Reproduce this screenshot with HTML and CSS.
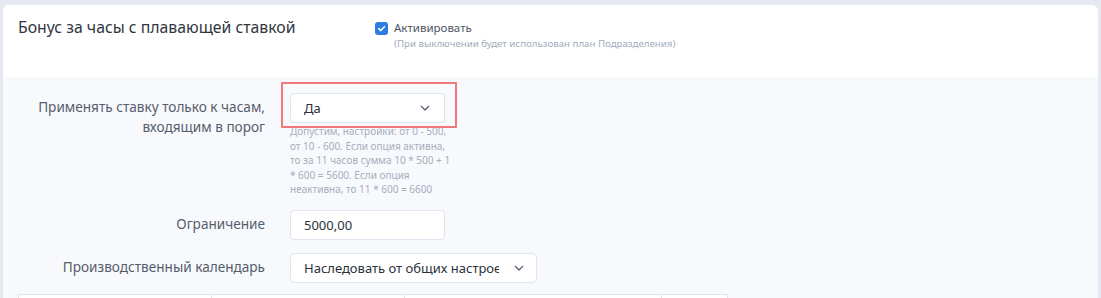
FILE: index.html
```html
<!DOCTYPE html>
<html lang="ru">
<head>
    <meta charset="UTF-8">
    <title>Бонус за часы с плавающей ставкой</title>
    <link rel="stylesheet" href="styles.css">
</head>
<body>
    <div class="card">
        <div class="card-header">
            <h2 class="card-title">Бонус за часы с плавающей ставкой</h2>
            <div class="activate">
                <label class="check-row">
                    <span class="checkbox">
                        <svg width="9" height="9" viewBox="0 0 10 10"><path d="M2 5.2 L4.2 7.3 L8.2 3" fill="none" stroke="#fff" stroke-width="1.8" stroke-linecap="round" stroke-linejoin="round"/></svg>
                    </span>
                    <span class="check-label">Активировать</span>
                </label>
                <div class="check-hint">(При выключении будет использован план Подразделения)</div>
            </div>
        </div>

        <div class="card-body">
            <div class="form-row">
                <div class="form-label">Применять ставку только к часам, входящим в порог</div>
                <div class="form-control">
                    <div class="highlight-wrap">
                        <div class="select select-short">
                            <span class="select-value">Да</span>
                            <svg class="chevron" width="10" height="6" viewBox="0 0 10 6"><path d="M1 1 L5 5 L9 1" fill="none" stroke="#5b6472" stroke-width="1.3"/></svg>
                        </div>
                        <div class="highlight"></div>
                    </div>
                    <div class="help-text">Допустим, настройки: от 0 - 500, от 10 - 600. Если опция активна, то за 11 часов сумма 10 * 500 + 1 * 600 = 5600. Если опция неактивна, то 11 * 600 = 6600</div>
                </div>
            </div>

            <div class="form-row">
                <div class="form-label">Ограничение</div>
                <div class="form-control">
                    <div class="input">5000,00</div>
                </div>
            </div>

            <div class="form-row">
                <div class="form-label">Производственный календарь</div>
                <div class="form-control">
                    <div class="select select-wide">
                        <span class="select-value">Наследовать от общих настроек</span>
                        <svg class="chevron" width="10" height="6" viewBox="0 0 10 6"><path d="M1 1 L5 5 L9 1" fill="none" stroke="#5b6472" stroke-width="1.3"/></svg>
                    </div>
                </div>
            </div>

            <table class="rates">
                <colgroup>
                    <col class="col-from">
                    <col class="col-to">
                    <col class="col-rate">
                    <col class="col-actions">
                </colgroup>
                <tr>
                    <th></th>
                    <th></th>
                    <th></th>
                    <th></th>
                </tr>
            </table>
        </div>
    </div>
</body>
</html>
```

FILE: styles.css
```css
html, body {
    height: 100%;
}
body {
    margin: 0;
    padding: 5px 3px 0 2px;
    box-sizing: border-box;
    background-color: #e6e9f1;
    font-family: "Noto Sans", "Open Sans", sans-serif;
    color: #333a45;
    overflow: hidden;
}
.card {
    height: 100%;
    background-color: #f8f9fd;
    border-radius: 6px 6px 0 0;
    border-left: 1px solid #e1e5ee;
    overflow: hidden;
}
.card-header {
    display: flex;
    align-items: flex-start;
    height: 72px;
    box-sizing: border-box;
    padding: 11px 0 0 15px;
    background-color: #fff;
}
.card-title {
    flex: 0 0 357px;
    margin: 0;
    font-size: 15.8px;
    font-weight: normal;
    color: #2f3640;
    line-height: 22px;
}
.activate {
    padding-top: 4px;
}
.check-row {
    display: flex;
    align-items: center;
    gap: 6px;
}
.checkbox {
    display: flex;
    align-items: center;
    justify-content: center;
    width: 13px;
    height: 13px;
    border-radius: 3px;
    background-color: #2d7be3;
}
.check-label {
    font-size: 11.5px;
    color: #4d5562;
    line-height: 16px;
}
.check-hint {
    margin: 1px 0 0 19px;
    font-size: 9.7px;
    color: #a2abbd;
    line-height: 14px;
}
.card-body {
    padding: 16px 0 0 15px;
}
.form-row {
    display: grid;
    grid-template-columns: 247px auto;
    column-gap: 25px;
    margin-bottom: 13px;
}
.form-row:last-of-type {
    margin-bottom: 11px;
}
.form-label {
    text-align: right;
    font-size: 13.6px;
    line-height: 20px;
    color: #555d6b;
    padding-top: 4px;
}
.form-control {
    display: flex;
    flex-direction: column;
    align-items: flex-start;
}
.highlight-wrap {
    position: relative;
}
.highlight {
    position: absolute;
    left: -9px;
    top: -11px;
    right: -12px;
    bottom: -5px;
    border: 2px solid #f0777a;
    border-radius: 1px;
}
.select, .input {
    display: flex;
    align-items: center;
    height: 30px;
    box-sizing: border-box;
    padding: 0 14px 0 13px;
    background-color: #fff;
    border: 1px solid #dfe4ee;
    border-radius: 4px;
    font-size: 13px;
    color: #2a313b;
}
.select-short, .input {
    width: 155px;
}
.select-wide {
    width: 247px;
    padding-right: 14px;
}
.select-value {
    flex: 1;
    white-space: nowrap;
    overflow: hidden;
}
.select-wide .select-value {
    flex: 0 0 195px;
    margin-right: 15px;
}
.chevron {
    flex: none;
    margin-left: auto;
}
.help-text {
    width: 166px;
    margin-top: 1px;
    font-size: 10px;
    line-height: 14.6px;
    color: #a6aebc;
}
.rates {
    width: 709px;
    table-layout: fixed;
    border-collapse: collapse;
    background-color: #fff;
    font-size: 13px;
}
.col-from { width: 193px; }
.col-to { width: 193px; }
.col-rate { width: 257px; }
.col-actions { width: 66px; }
.rates th {
    border: 1px solid #e0e4ec;
    height: 36px;
    padding: 0;
}
```
